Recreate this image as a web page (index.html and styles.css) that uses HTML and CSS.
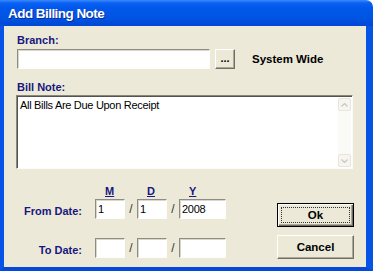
FILE: index.html
```html
<!DOCTYPE html>
<html lang="en">
<head>
    <meta charset="UTF-8" />
    <link rel="stylesheet" href="styles.css">
</head>
<body>

    <div class="window">
        <div class="titlebar">Add Billing Note</div>

        <div class="frame">
            <div class="label">Branch:</div>
            <div class="branch-row">
                <input class="field branch-field" type="text" value="" />
                <div class="btn dots">...</div>
                <div class="system">System Wide</div>
            </div>

            <div class="label note-label">Bill Note:</div>
            <div class="note">
                <div class="note-text">All Bills Are Due Upon Receipt</div>
                <div class="scrollbar">
                    <div class="sb-btn">
                        <svg width="7" height="4" viewBox="0 0 7 4"><path d="M0.5 3.5 L3.5 0.5 L6.5 3.5" fill="none" stroke="#c9c7bd" stroke-width="1.2"/></svg>
                    </div>
                    <div class="sb-track"></div>
                    <div class="sb-btn">
                        <svg width="7" height="4" viewBox="0 0 7 4"><path d="M0.5 0.5 L3.5 3.5 L6.5 0.5" fill="none" stroke="#c9c7bd" stroke-width="1.2"/></svg>
                    </div>
                </div>
            </div>

            <div class="bottom">
                <div class="dates">
                    <div class="date-row mdy-row">
                        <span></span>
                        <span class="mdy">M</span>
                        <span></span>
                        <span class="mdy">D</span>
                        <span></span>
                        <span class="mdy">Y</span>
                    </div>
                    <div class="date-row">
                        <span class="date-label">From Date:</span>
                        <input class="field" type="text" value="1" />
                        <span class="slash">/</span>
                        <input class="field" type="text" value="1" />
                        <span class="slash">/</span>
                        <input class="field" type="text" value="2008" />
                    </div>
                    <div class="date-row to-row">
                        <span class="date-label">To Date:</span>
                        <input class="field" type="text" value="" />
                        <span class="slash">/</span>
                        <input class="field" type="text" value="" />
                        <span class="slash">/</span>
                        <input class="field" type="text" value="" />
                    </div>
                </div>

                <div class="buttons">
                    <div class="btn default"><span class="focus">Ok</span></div>
                    <div class="btn cancel">Cancel</div>
                </div>
            </div>
        </div>
    </div>

</body>
</html>
```

FILE: styles.css
```css
html,
body {
    padding: 0;
    margin: 0;
    background: #fff;
    font-family: "Liberation Sans", Arial, sans-serif;
}
.window {
    width: 373px;
    height: 271px;
    display: flex;
    flex-direction: column;
}
.titlebar {
    height: 26px;
    padding: 2px 0 0 8px;
    box-sizing: border-box;
    line-height: 24px;
    font-size: 13.5px;
    font-weight: bold;
    letter-spacing: -0.55px;
    color: #fff;
    text-shadow: 1px 1px 0 #0a2a9a;
    border-radius: 0 7px 0 0;
    background: linear-gradient(#3b8cff 0, #0a60f2 3px, #0058ea 8px, #0054e3 18px, #0047d4 26px);
}
.frame {
    flex: 1;
    background: #ece9d8;
    border-left: 4px solid #0554e6;
    border-right: 7px solid #0554e6;
    border-bottom: 4px solid #0549dc;
    padding: 7px 12px 0 13px;
}
.label {
    font-size: 11px;
    font-weight: bold;
    line-height: 14px;
    color: #17177f;
}
.field {
    box-sizing: border-box;
    height: 20px;
    margin: 0;
    padding: 0 2px;
    border: 1px solid;
    border-color: #8f8d82 #fdfdfb #fdfdfb #8f8d82;
    box-shadow: inset 1px 1px 0 #d9d6ca;
    background: #fff;
    font-family: "Liberation Sans", Arial, sans-serif;
    font-size: 11px;
    letter-spacing: -0.3px;
    color: #000;
    outline: none;
}
.branch-row {
    display: flex;
    align-items: center;
    margin-top: 2px;
    height: 20px;
}
.branch-field {
    width: 193px;
}
.btn {
    box-sizing: border-box;
    display: flex;
    align-items: center;
    justify-content: center;
    background: #ece9d8;
    border: 1px solid;
    border-color: #fff #716f64 #716f64 #fff;
    box-shadow: inset -1px -1px 0 #aca899;
    font-size: 11px;
    font-weight: bold;
    color: #000;
}
.dots {
    width: 20px;
    height: 20px;
    margin-left: 5px;
    line-height: 10px;
    padding-bottom: 3px;
}
.system {
    margin-left: 17px;
    font-size: 11.5px;
    font-weight: bold;
    color: #000;
}
.note-label {
    margin-top: 11px;
}
.note {
    display: flex;
    box-sizing: border-box;
    width: 337px;
    height: 74px;
    margin: 1px 0 0 -1px;
    border: 1px solid;
    border-color: #8a887c #fbfbf8 #fbfbf8 #8a887c;
    box-shadow: inset 1px 1px 0 #54534c;
    background: #fff;
}
.note-text {
    flex: 1;
    padding: 3px 0 0 3px;
    font-size: 11px;
    letter-spacing: -0.3px;
    line-height: 13px;
    color: #000;
}
.scrollbar {
    width: 13px;
    margin: 2px 1px 1px 0;
    display: flex;
    flex-direction: column;
    background: #fafaf6;
}
.sb-btn {
    box-sizing: border-box;
    height: 13px;
    display: flex;
    align-items: center;
    justify-content: center;
    border: 1px solid #e8e6dc;
    border-radius: 2px;
    background: #f6f5ef;
}
.sb-track {
    flex: 1;
}
.bottom {
    display: flex;
    margin-top: 15px;
}
.date-row {
    display: grid;
    grid-template-columns: 78px 30px 12px 30px 12px 47px;
    height: 20px;
}
.mdy-row {
    height: 15px;
}
.to-row {
    margin-top: 19px;
}
.mdy {
    padding-left: 10px;
    font-size: 11px;
    font-weight: bold;
    line-height: 14px;
    text-decoration: underline;
    color: #17177f;
}
.date-label {
    padding: 2px 13px 0 0;
    text-align: right;
    font-size: 11px;
    font-weight: bold;
    line-height: 20px;
    color: #17177f;
}
.slash {
    text-align: center;
    font-size: 12px;
    line-height: 20px;
    color: #333;
}
.buttons {
    margin-left: auto;
    padding-top: 19px;
    display: flex;
    flex-direction: column;
}
.buttons .btn {
    width: 77px;
    height: 24px;
    font-size: 11.5px;
}
.default {
    border: 1px solid #000;
    box-shadow: inset 1px 1px 0 #fff, inset -1px -1px 0 #716f64, inset -2px -2px 0 #aca899;
}
.focus {
    box-sizing: border-box;
    width: 69px;
    height: 16px;
    border: 1px dotted #333;
    text-align: center;
    line-height: 14px;
}
.cancel {
    margin-top: 8px;
}
```
